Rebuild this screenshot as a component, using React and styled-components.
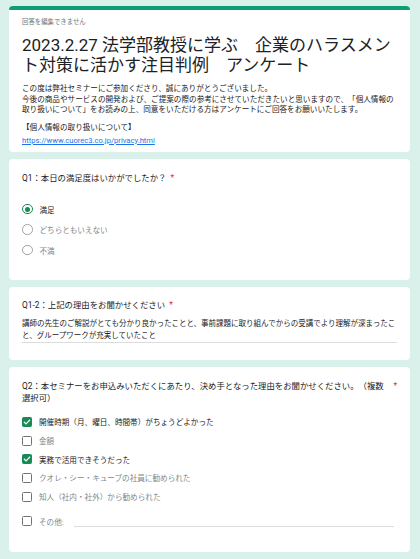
import React from 'react';
import styled, { createGlobalStyle } from 'styled-components';

const BAR_GREEN = '#0f9d74';
const CONTROL_GREEN = '#188a56';
const TEXT = '#202124';
const MUTED = '#80868b';

const GlobalStyle = createGlobalStyle`
  html, body {
    margin: 0;
    padding: 0;
    background: #d9f0eb;
  }
  body {
    font-family: Roboto, "Noto Sans CJK JP", sans-serif;
    color: ${TEXT};
    text-spacing-trim: space-all;
  }
`;

const Page = styled.div`
  display: flex;
  flex-direction: column;
  gap: 7px;
  padding: 6px 10px 6px 9px;
`;

const Card = styled.section`
  background: #fff;
  border-radius: 4px;
  padding: ${(p) => p.$pad || '13px 13px 20px'};
  ${(p) => p.$header && `border-top: 4px solid ${BAR_GREEN};`}
`;

const Notice = styled.div`
  font-size: 6.4px;
  line-height: 9px;
  color: #70757a;
  margin-top: 2px;
`;

const Title = styled.h1`
  margin: 8.5px 0 0;
  font-size: 17px;
  font-weight: 400;
  line-height: 20px;
  color: ${TEXT};
`;

const Description = styled.p`
  margin: 9px 0 0;
  font-size: 7.6px;
  line-height: 10.5px;
  color: ${TEXT};
`;

const Privacy = styled.div`
  margin-top: 6.5px;
  font-size: 7.6px;
  line-height: 12.7px;
`;

const Link = styled.a`
  color: #1a73e8;
  text-decoration: underline;
`;

const Question = styled.div`
  display: flex;
  align-items: flex-start;
  font-size: 8.4px;
  line-height: 12px;
  color: ${TEXT};
`;

const QuestionText = styled.span`
  flex: ${(p) => (p.$fill ? 1 : '0 1 auto')};
`;

const Star = styled.span`
  color: #d93025;
  margin-left: 4px;
`;

const Options = styled.div`
  display: flex;
  flex-direction: column;
  margin-top: ${(p) => p.$top}px;
`;

const Option = styled.label`
  display: flex;
  align-items: center;
  gap: 7px;
  height: ${(p) => p.$h}px;
  margin-top: ${(p) => p.$extra || 0}px;
  font-size: 7.6px;
  color: ${(p) => (p.$on ? TEXT : MUTED)};
`;

const Radio = styled.span`
  box-sizing: border-box;
  width: 10.5px;
  height: 10.5px;
  border-radius: 50%;
  border: 1.3px solid ${(p) => (p.$on ? CONTROL_GREEN : '#a0a5aa')};
  display: flex;
  align-items: center;
  justify-content: center;
  flex-shrink: 0;
  &::after {
    content: '';
    width: 5px;
    height: 5px;
    border-radius: 50%;
    background: ${(p) => (p.$on ? CONTROL_GREEN : 'transparent')};
  }
`;

const Box = styled.span`
  box-sizing: border-box;
  width: 10px;
  height: 10px;
  border-radius: 1.5px;
  border: 1.4px solid ${(p) => (p.$on ? CONTROL_GREEN : '#6f7479')};
  background: ${(p) => (p.$on ? CONTROL_GREEN : '#fff')};
  display: flex;
  align-items: center;
  justify-content: center;
  flex-shrink: 0;
`;

const Answer = styled.div`
  margin-top: 7px;
  font-size: 7.5px;
  line-height: 12px;
  color: ${TEXT};
  border-bottom: 1px solid #dadce0;
`;

const OtherLine = styled.span`
  flex: 1;
  align-self: center;
  margin: 10px 3px 0 3px;
  border-bottom: 1px solid #dadce0;
`;

const Check = () => (
  <svg width="8" height="8" viewBox="0 0 24 24" fill="none">
    <path d="M4 12.5l5 5L20 6.5" stroke="#fff" strokeWidth="3.5" strokeLinecap="square" />
  </svg>
);

const REASONS = [
  { label: '開催時期（月、曜日、時間帯）がちょうどよかった', on: true },
  { label: '金額', on: false },
  { label: '実務で活用できそうだった', on: true },
  { label: 'クオレ・シー・キューブの社員に勧められた', on: false },
  { label: '知人（社内・社外）から勧められた', on: false },
];

const SATISFACTION = [
  { label: '満足', on: true },
  { label: 'どちらともいえない', on: false },
  { label: '不満', on: false },
];

export default function App() {
  return (
    <>
      <GlobalStyle />
      <Page>
        <Card $header $pad="5.5px 13px 4.5px">
          <Notice>回答を編集できません</Notice>
          <Title>2023.2.27 法学部教授に学ぶ　企業のハラスメント対策に活かす注目判例　アンケート</Title>
          <Description>
            この度は弊社セミナーにご参加くださり、誠にありがとうございました。
            <br />
            今後の商品やサービスの開発および、ご提案の際の参考にさせていただきたいと思いますので、「個人情報の取り扱いについて」をお読みの上、同意をいただける方はアンケートにご回答をお願いいたします。
          </Description>
          <Privacy>
            【個人情報の取り扱いについて】
            <br />
            <Link href="#">https://www.cuorec3.co.jp/privacy.html</Link>
          </Privacy>
        </Card>

        <Card $pad="13px 13px 19.5px">
          <Question>
            <QuestionText>Q1：本日の満足度はいかがでしたか？</QuestionText>
            <Star>*</Star>
          </Question>
          <Options $top={15}>
            {SATISFACTION.map((o) => (
              <Option key={o.label} $on={o.on} $h={20.5}>
                <Radio $on={o.on} />
                {o.label}
              </Option>
            ))}
          </Options>
        </Card>

        <Card $pad="12px 13px 17px">
          <Question>
            <QuestionText>Q1-2：上記の理由をお聞かせください</QuestionText>
            <Star>*</Star>
          </Question>
          <Answer>
            講師の先生のご解説がとても分かり良かったことと、事前課題に取り組んでからの受講でより理解が深まったこと、グループワークが充実していたこと
          </Answer>
        </Card>

        <Card $pad="13px 13px 21px">
          <Question>
            <QuestionText $fill>Q2：本セミナーをお申込みいただくにあたり、決め手となった理由をお聞かせください。（複数選択可）</QuestionText>
            <Star>*</Star>
          </Question>
          <Options $top={8.6}>
            {REASONS.map((o) => (
              <Option key={o.label} $on={o.on} $h={18.7}>
                <Box $on={o.on}>{o.on && <Check />}</Box>
                {o.label}
              </Option>
            ))}
            <Option $h={18.7} $extra={6}>
              <Box />
              その他:
              <OtherLine />
            </Option>
          </Options>
        </Card>
      </Page>
    </>
  );
}
